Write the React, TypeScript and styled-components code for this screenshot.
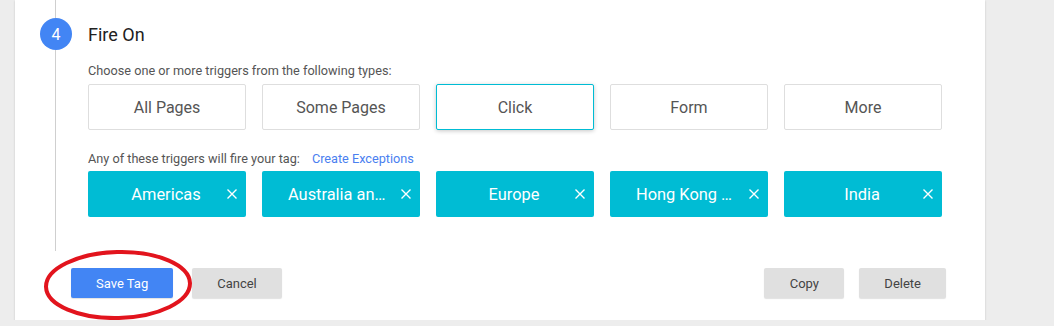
import styled, { createGlobalStyle, css } from "styled-components";

const GlobalStyle = createGlobalStyle`
  html, body {
    margin: 0;
    background: #ededed;
    font-family: Roboto, "Liberation Sans", Arial, sans-serif;
  }
`;

const TRIGGER_TYPES = ["All Pages", "Some Pages", "Click", "Form", "More"];
const ACTIVE_TYPE = "Click";
const TRIGGERS = [
  "Americas",
  "Australia and New Zealand",
  "Europe",
  "Hong Kong and Taiwan",
  "India",
];

const CloseIcon = () => (
  <svg width="10" height="10" viewBox="0 0 10 10" aria-hidden="true">
    <path d="M0.5 0.5 L9.5 9.5 M9.5 0.5 L0.5 9.5" stroke="#fff" strokeWidth="1.4" fill="none" />
  </svg>
);

const App = () => {
  return (
    <>
      <GlobalStyle />
      <S.Card>
        <S.Step>
          <S.Rail>
            <S.Line fixed />
            <S.StepNumber>4</S.StepNumber>
            <S.Line />
          </S.Rail>
          <S.Content>
            <S.Title>Fire On</S.Title>
            <S.Hint top={13}>Choose one or more triggers from the following types:</S.Hint>
            <S.Grid top={5}>
              {TRIGGER_TYPES.map((type) => (
                <S.TypeBox key={type} active={type === ACTIVE_TYPE}>
                  {type}
                </S.TypeBox>
              ))}
            </S.Grid>
            <S.Hint top={21}>
              Any of these triggers will fire your tag:
              <S.Link>Create Exceptions</S.Link>
            </S.Hint>
            <S.Grid top={4}>
              {TRIGGERS.map((name) => (
                <S.Chip key={name}>
                  <S.ChipLabel>{name}</S.ChipLabel>
                  <CloseIcon />
                </S.Chip>
              ))}
            </S.Grid>
          </S.Content>
        </S.Step>
        <S.Footer>
          <S.Group gap={19}>
            <S.Button primary>Save Tag</S.Button>
            <S.Button>Cancel</S.Button>
          </S.Group>
          <S.Group gap={15}>
            <S.Button>Copy</S.Button>
            <S.Button>Delete</S.Button>
          </S.Group>
          <S.Circle width="160" height="76" viewBox="0 0 160 76">
            <ellipse
              cx="80"
              cy="38"
              rx="72"
              ry="33"
              fill="none"
              stroke="#e2141d"
              strokeWidth="4"
              transform="rotate(-1.5 80 38)"
            />
          </S.Circle>
        </S.Footer>
      </S.Card>
    </>
  );
};

const S = {
  Card: styled.div`
    width: 970px;
    margin-left: 15px;
    background: #fff;
    box-shadow: 0 1px 2px rgba(0, 0, 0, 0.18);
    padding: 0 39px 22px 25px;
    box-sizing: border-box;
  `,

  Step: styled.div`
    display: flex;
  `,

  Rail: styled.div`
    display: flex;
    flex-direction: column;
    width: 32px;
    flex-shrink: 0;
  `,

  Line: styled.div<{ fixed?: boolean }>`
    width: 1px;
    margin-left: 15px;
    background: #cfcfcf;
    ${({ fixed }) => (fixed ? "height: 18px;" : "flex: 1;")}
  `,

  StepNumber: styled.div`
    width: 32px;
    height: 32px;
    border-radius: 50%;
    background: #4285f4;
    color: #fff;
    font-size: 16px;
    display: flex;
    align-items: center;
    justify-content: center;
  `,

  Content: styled.div`
    margin-left: 16px;
    flex: 1;
    padding: 18px 0 34px;
  `,

  Title: styled.div`
    height: 32px;
    display: flex;
    align-items: center;
    font-size: 18px;
    color: #212121;
  `,

  Hint: styled.div<{ top: number }>`
    margin-top: ${({ top }) => top}px;
    font-size: 12.7px;
    line-height: 16px;
    color: #555;
  `,

  Link: styled.span`
    color: #4a80f0;
    margin-left: 12px;
    cursor: pointer;
  `,

  Grid: styled.div<{ top: number }>`
    display: grid;
    grid-template-columns: repeat(5, 158px);
    column-gap: 16px;
    margin-top: ${({ top }) => top}px;
  `,

  TypeBox: styled.div<{ active?: boolean }>`
    height: 46px;
    box-sizing: border-box;
    border: 1px solid #dedede;
    border-radius: 2px;
    display: flex;
    align-items: center;
    justify-content: center;
    font-size: 16px;
    color: #555;
    background: #fff;
    ${({ active }) =>
      active &&
      css`
        border-color: #00bcd4;
        box-shadow: 0 1px 4px rgba(0, 0, 0, 0.22);
      `}
  `,

  Chip: styled.div`
    height: 46px;
    border-radius: 2px;
    background: #00bcd4;
    color: #fff;
    display: flex;
    align-items: center;
    padding: 0 9px 0 26px;
    gap: 9px;
  `,

  ChipLabel: styled.span`
    flex: 1;
    min-width: 0;
    text-align: center;
    font-size: 16.4px;
    white-space: nowrap;
    overflow: hidden;
    text-overflow: ellipsis;
  `,

  Footer: styled.div`
    position: relative;
    display: flex;
    justify-content: space-between;
    margin-left: 31px;
    margin-top: 17px;
  `,

  Group: styled.div<{ gap: number }>`
    display: flex;
    gap: ${({ gap }) => gap}px;
  `,

  Button: styled.button<{ primary?: boolean }>`
    height: 30px;
    padding: 0 25px;
    min-width: 80px;
    border: none;
    border-radius: 2px;
    font-family: inherit;
    font-size: 13px;
    cursor: pointer;
    box-shadow: 0 1px 1px rgba(0, 0, 0, 0.12);
    background: ${({ primary }) => (primary ? "#4285f4" : "#e0e0e0")};
    color: ${({ primary }) => (primary ? "#fff" : "#444")};
  `,

  Circle: styled.svg`
    position: absolute;
    left: -33px;
    top: -21px;
    pointer-events: none;
  `,
};

export default App;
